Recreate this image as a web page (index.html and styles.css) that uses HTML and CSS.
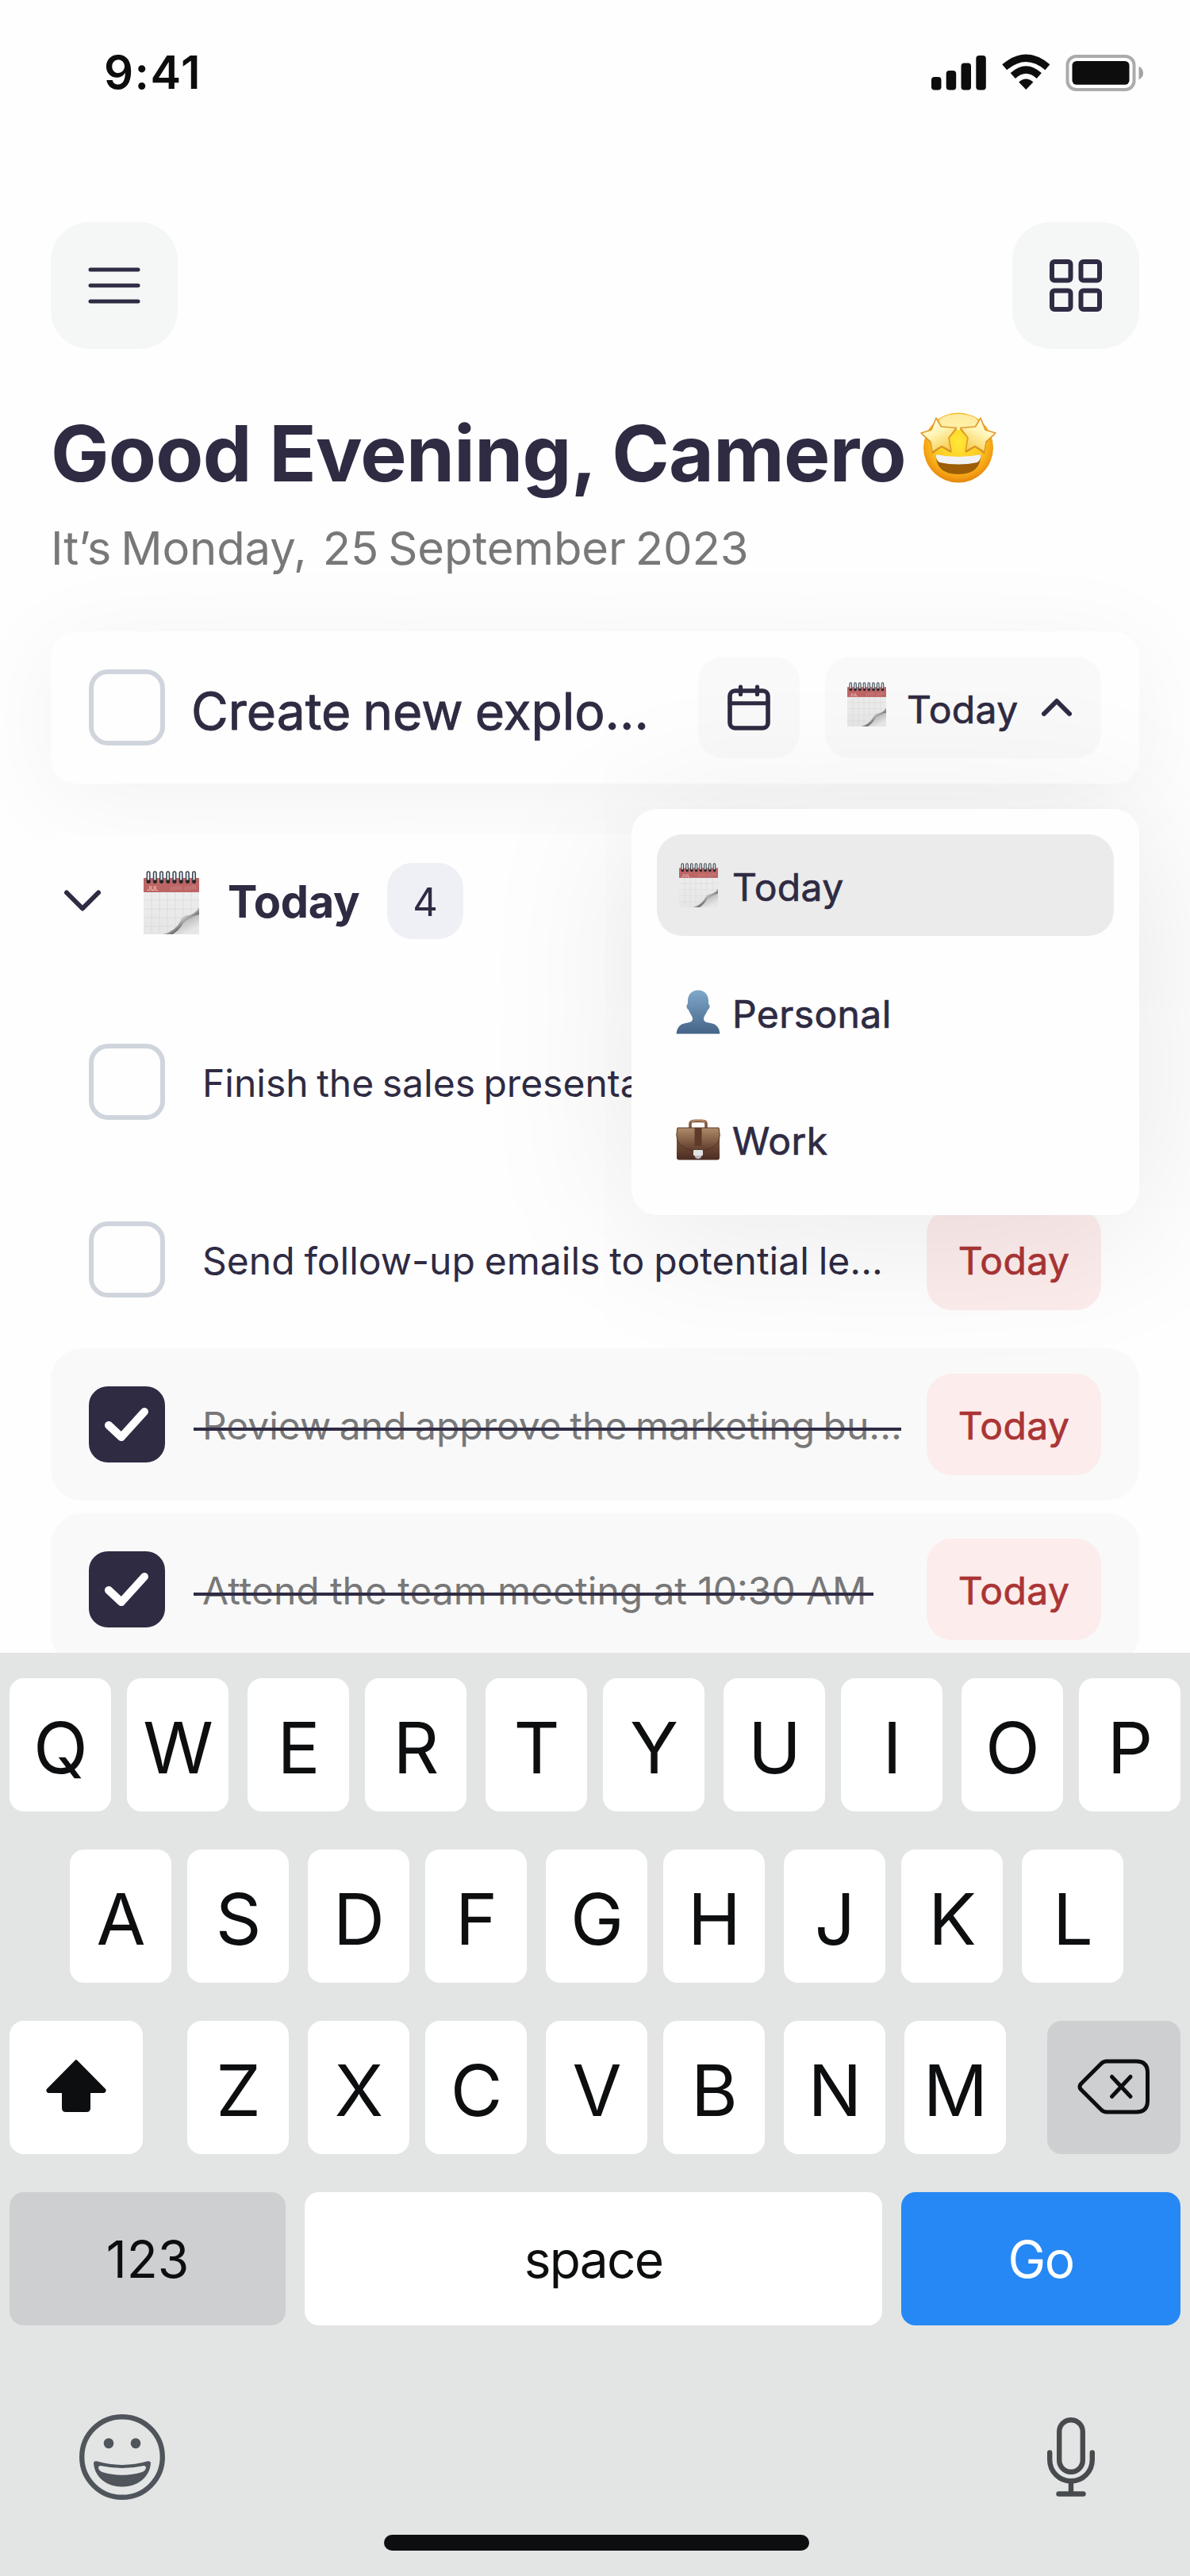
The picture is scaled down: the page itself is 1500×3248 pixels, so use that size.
FILE: index.html
```html
<!DOCTYPE html>
<html lang="en">
<head>
<meta charset="utf-8">
<title>Tasks</title>
<link rel="stylesheet" href="styles.css">
</head>
<body>
<svg class="defs" aria-hidden="true">
  <defs>
    <linearGradient id="page" x1="0" y1="0" x2="0" y2="1"><stop offset="0" stop-color="#efefef"/><stop offset="1" stop-color="#e6e6e6"/></linearGradient>
    <linearGradient id="curl" x1="0.1" y1="0.1" x2="0.62" y2="0.62"><stop offset="0" stop-color="#fdfdfd"/><stop offset="0.45" stop-color="#f4f4f4"/><stop offset="0.8" stop-color="#b5b5b5"/><stop offset="1" stop-color="#6f6f6f"/></linearGradient>
    <linearGradient id="under" x1="0.3" y1="0.2" x2="0.7" y2="0.8"><stop offset="0" stop-color="#7c7c7c"/><stop offset="0.35" stop-color="#c4c4c4"/><stop offset="1" stop-color="#e6e6e6"/></linearGradient>
    <linearGradient id="person" x1="0" y1="0" x2="0" y2="1"><stop offset="0" stop-color="#7fa8ca"/><stop offset="1" stop-color="#456487"/></linearGradient>
    <linearGradient id="leather" x1="0" y1="0" x2="0" y2="1"><stop offset="0" stop-color="#a98463"/><stop offset="0.45" stop-color="#74503a"/><stop offset="1" stop-color="#4b2c22"/></linearGradient>
    <linearGradient id="flap" x1="0" y1="0" x2="0" y2="1"><stop offset="0" stop-color="#b08c6a"/><stop offset="1" stop-color="#5c3929"/></linearGradient>
    <radialGradient id="face" cx="0.5" cy="0.42" r="0.58"><stop offset="0" stop-color="#ffe838"/><stop offset="0.6" stop-color="#fcc921"/><stop offset="0.88" stop-color="#f39c12"/><stop offset="1" stop-color="#e2860c"/></radialGradient>
    <linearGradient id="star" x1="0" y1="0" x2="0.6" y2="1"><stop offset="0" stop-color="#fffef0"/><stop offset="0.5" stop-color="#fff6b8"/><stop offset="1" stop-color="#f7cf52"/></linearGradient>
    <g id="ring"><rect x="-1.7" y="1" width="3.6" height="14" rx="1.8" fill="#e9eef2" stroke="#3b4650" stroke-width="1.5"/><circle cx="0.3" cy="13.6" r="2.3" fill="#2b2426"/></g>
    <symbol id="calendar" viewBox="0 0 70 80">
      <rect y="9" width="70" height="71" fill="url(#page)"/>
      <path d="M10 27V79M20 27V79M30 27V79M40 27V79M50 27V79M60 27V79M0 37H70M0 48H70M0 59H70M0 70H70" stroke="#d9d9d9" stroke-width="0.8"/>
      <rect y="9" width="70" height="18" fill="#bd6565"/>
      <path d="M35 20V25M38 20V25M41 19V24M44 19V24M47 19V24M53 20V25M56 19V24M59 19V24M62 18V23M65 18V23" stroke="#cf8b8b" stroke-width="1"/>
      <text x="4.5" y="25" class="calendar-month">JUL</text>
      <path d="M24 80Q40 76 46 64Q49 56 57 56Q65 54 70 46V57Q56 58 50 66Q46 74 37 80Z" fill="url(#curl)"/>
      <path d="M37 80Q46 74 50 66Q56 58 70 55V80Z" fill="url(#under)"/>
      <use href="#ring" x="6"/><use href="#ring" x="14.2"/><use href="#ring" x="22.4"/><use href="#ring" x="30.6"/><use href="#ring" x="38.8"/><use href="#ring" x="47"/><use href="#ring" x="55.2"/><use href="#ring" x="63.4"/>
    </symbol>
  </defs>
</svg>

<main class="app">
  <div class="status">
    <span class="status__time">9:41</span>
    <svg class="status__icons" width="268" height="48" viewBox="0 0 268 48">
      <g fill="#0d0d0d">
        <rect x="0" y="30" width="12.5" height="16.5" rx="4"/><rect x="18.7" y="22" width="12.5" height="24.5" rx="4"/><rect x="37.5" y="12.5" width="12.5" height="34" rx="4"/><rect x="56.3" y="3" width="12.5" height="43.5" rx="4"/>
        <path d="M119.300 46L110.200 36.600Q119.300 28.500 128.400 36.600Z"/>
      </g>
      <g fill="none" stroke="#0d0d0d" stroke-width="9.200">
        <path d="M102.800 28.500Q119.300 13.500 135.800 28.500"/>
        <path d="M92.200 17.800Q119.300 -5.200 146.400 17.800"/>
      </g>
      <rect x="171.500" y="4" width="84" height="42" rx="11" fill="none" stroke="#ababab" stroke-width="4"/>
      <rect x="177.500" y="10" width="72" height="29.800" rx="5.500" fill="#0d0d0d"/>
      <path d="M261.500 16.500Q267 19.500 267 25Q267 30.500 261.500 33.500Z" fill="#a3a3a3"/>
    </svg>
  </div>

  <div class="toolbar">
    <button class="square-btn" aria-label="Menu">
      <svg width="72" height="60" viewBox="0 0 72 60"><path d="M6 10H66M6 30H66M6 50H66" stroke="#2f2b43" stroke-width="5" stroke-linecap="round"/></svg>
    </button>
    <button class="square-btn" aria-label="Grid view">
      <svg width="66" height="66" viewBox="0 0 66 66" fill="none" stroke="#2f2b43" stroke-width="6"><rect x="3" y="3" width="23.500" height="23.500" rx="3"/><rect x="39.500" y="3" width="23.500" height="23.500" rx="3"/><rect x="3" y="39.500" width="23.500" height="23.500" rx="3"/><rect x="39.500" y="39.500" width="23.500" height="23.500" rx="3"/></svg>
    </button>
  </div>

  <header class="greeting">
    <h1 class="greeting__title"><span>Good Evening, Camero</span>
      <svg width="100" height="92" viewBox="0 0 100 92">
        <circle cx="50" cy="45.500" r="44" fill="url(#face)"/>
        <ellipse cx="50" cy="13" rx="25" ry="10" fill="#fffad0" opacity="0.75"/>
        <path d="M21.500 54Q50 63 78.500 54Q78 79 50 79Q22 79 21.500 54Z" fill="#9c5d06"/>
        <path d="M21.500 54Q50 60 78.500 54Q78.500 61 74 64Q50 69 26 64Q21.500 61 21.500 54Z" fill="#f2f2f4"/>
        <g id="eye"><path d="M22 10L29 20L48 22L38 34L41 52L29 45L17 53L15 39L4 29L16 24Z" fill="#a86408" opacity="0.75"/><path d="M22 8L28.500 19L47.500 20.500L38 33L41 50L29 43.500L17 51L15 38L3 27L16 23Z" fill="url(#star)" stroke="#e09a2c" stroke-width="1.600" stroke-linejoin="round"/></g>
        <use href="#eye" transform="matrix(-1 0 0 1 100 0)"/>
      </svg>
    </h1>
    <p class="greeting__date">It’s Monday, <span class="greeting__day">25 September 2023</span></p>
  </header>

  <section class="add-task">
    <span class="checkbox"></span>
    <span class="add-task__title">Create new explo...</span>
    <button class="chip chip--icon" aria-label="Pick date">
      <svg width="54" height="58" viewBox="0 0 54 58" fill="none" stroke="#2f2b43" stroke-width="5.600" stroke-linecap="round"><rect x="3" y="8" width="48" height="47" rx="6.500"/><path d="M3 23.700H51" stroke-width="5"/><path d="M16.500 3V12.500M37.500 3V12.500" stroke-width="5.200"/></svg>
    </button>
    <button class="chip chip--select">
      <svg class="chip__emoji" width="49" height="56"><use href="#calendar"/></svg>
      <span class="chip__label">Today</span>
      <svg class="chip__chevron" width="38" height="24" viewBox="0 0 38 24" fill="none" stroke="#2f2b43" stroke-width="6" stroke-linecap="round" stroke-linejoin="round"><path d="M3 20L19 4L35 20"/></svg>
    </button>
  </section>

  <section class="list">
    <div class="list__header">
      <svg width="46" height="28" viewBox="0 0 46 28" fill="none" stroke="#2f2b43" stroke-width="6" stroke-linecap="round" stroke-linejoin="round"><path d="M3 3.500L23 23.500L43 3.500"/></svg>
      <svg class="list__emoji" width="70" height="80"><use href="#calendar"/></svg>
      <h2 class="list__title">Today</h2>
      <span class="list__count">4</span>
    </div>
    <div class="task">
      <span class="checkbox"></span>
      <span class="task__title">Finish the sales presentation</span>
    </div>
    <div class="task task--second">
      <span class="checkbox"></span>
      <span class="task__title task__title--loose">Send follow-up emails to potential le...</span>
      <span class="tag">Today</span>
    </div>
    <div class="task task--done">
      <span class="checkbox checkbox--on"><svg width="60" height="48" viewBox="0 0 60 48"><path d="M7 25L23 40L52 8" fill="none" stroke="#fff" stroke-width="10" stroke-linecap="round" stroke-linejoin="round"/></svg></span>
      <span class="task__title"><span class="strike strike--long">Review and approve the marketing bu...</span></span>
      <span class="tag">Today</span>
    </div>
    <div class="task task--done">
      <span class="checkbox checkbox--on"><svg width="60" height="48" viewBox="0 0 60 48"><path d="M7 25L23 40L52 8" fill="none" stroke="#fff" stroke-width="10" stroke-linecap="round" stroke-linejoin="round"/></svg></span>
      <span class="task__title task__title--wide"><span class="strike">Attend the team meeting at 10:30 AM</span></span>
      <span class="tag">Today</span>
    </div>
  </section>

  <ul class="menu">
    <li class="menu__item menu__item--active">
      <span class="menu__icon"><svg width="49" height="56"><use href="#calendar"/></svg></span>
      <span>Today</span>
    </li>
    <li class="menu__item">
      <span class="menu__icon"><svg width="56" height="56" viewBox="0 0 56 56"><path d="M28 0.500C19 0.500 15 7 15 14Q15 17 14.500 18.500Q13 19 13.500 21.500Q14.200 25 16 25.500C17.500 30 21 33 21 36.500C21 40.500 17.500 41 12 42Q1 44 0.500 55.500H55.500Q55 44 44 42C38.500 41 35 40.500 35 36.500C35 33 38.500 30 40 25.500Q41.800 25 42.500 21.500Q43 19 41.500 18.500Q41 17 41 14C41 7 37 0.500 28 0.500Z" fill="url(#person)"/></svg></span>
      <span>Personal</span>
    </li>
    <li class="menu__item">
      <span class="menu__icon"><svg width="56" height="56" viewBox="0 0 56 56">
        <path d="M18 14V9Q18 5.500 23 5.500H33Q38 5.500 38 9V14" fill="none" stroke="#80583e" stroke-width="3.600"/>
        <path d="M19.500 7.500Q20 4.800 24 4.500H32Q36 4.800 36.500 7.500" fill="none" stroke="#b58b6b" stroke-width="2"/>
        <rect x="1" y="14" width="54" height="40.500" rx="3" fill="url(#leather)"/>
        <path d="M2 14H54Q56.500 23 54 31Q47 43 28 43.500Q9 43 2 31Q-0.500 23 2 14Z" fill="url(#flap)" stroke="#4f2f23" stroke-width="0.900"/>
        <rect x="23.500" y="14" width="9" height="23" fill="#5f3a28"/>
        <rect x="22" y="42" width="12" height="7" rx="1" fill="#e4e4e6"/><path d="M23.500 49H32.500Q32 53 28 53Q24 53 23.500 49Z" fill="#bdbdc0"/>
      </svg></span>
      <span>Work</span>
    </li>
  </ul>
</main>

<section class="keyboard">
  <div class="keys">
    <span class="key">Q</span><span class="key">W</span><span class="key">E</span><span class="key">R</span><span class="key">T</span><span class="key">Y</span><span class="key">U</span><span class="key">I</span><span class="key">O</span><span class="key">P</span>
  </div>
  <div class="keys keys--inset">
    <span class="key">A</span><span class="key">S</span><span class="key">D</span><span class="key">F</span><span class="key">G</span><span class="key">H</span><span class="key">J</span><span class="key">K</span><span class="key">L</span>
  </div>
  <div class="keys keys--third">
    <span class="key key--side"><svg width="76" height="70" viewBox="0 0 76 70"><path d="M38 2.500L74 39Q74.500 41 72.500 41.500H54.500V62Q54.500 65.500 51 65.500H25Q21.500 65.500 21.500 62V41.500H3.500Q1.500 41 2 39Z" fill="#0c0e0f" stroke="#0c0e0f" stroke-width="3" stroke-linejoin="round"/></svg></span>
    <span class="key">Z</span><span class="key">X</span><span class="key">C</span><span class="key">V</span><span class="key">B</span><span class="key">N</span><span class="key key--m">M</span>
    <span class="key key--side key--grey"><svg width="92" height="70" viewBox="0 0 92 70" fill="none" stroke="#0c0e0f" stroke-width="5" stroke-linecap="round" stroke-linejoin="round"><path d="M37 3H74Q88.500 3 88.500 17V53Q88.500 67 74 67H37Q33 67 30 64L4.500 38.500Q1.500 35 4.500 31.500L30 6Q33 3 37 3Z"/><path d="M43.500 22.500L67 47.500M67 22.500L43.500 47.500"/></svg></span>
  </div>
  <div class="keys keys--bottom">
    <span class="key key--word key--grey key--num">123</span>
    <span class="key key--word key--space">space</span>
    <span class="key key--word key--go">Go</span>
  </div>
  <div class="keyboard__tools">
    <svg width="108" height="108" viewBox="0 0 108 108"><circle cx="54" cy="54" r="50.800" fill="none" stroke="#50555c" stroke-width="6.400"/><ellipse cx="37" cy="36.700" rx="6.300" ry="6.500" fill="#50555c"/><ellipse cx="71" cy="36.700" rx="6.300" ry="6.500" fill="#50555c"/><path fill-rule="evenodd" d="M22 59.300Q54 68.500 86 59.300Q90 58.500 90 62C88.500 80 73 91.500 54 91.500S19.500 80 18 62Q18 58.500 22 59.300ZM27 65Q24 64.500 24 67.500Q24.500 71 29 73Q54 80.500 79 73Q83.500 71 84 67.500Q84 64.500 81 65Q54 71 27 65Z" fill="#50555c"/></svg>
    <svg width="60" height="100" viewBox="0 0 60 100" fill="none" stroke="#474b4d" stroke-width="6.400" stroke-linecap="round"><rect x="15.200" y="3.200" width="29.600" height="65.600" rx="14.800"/><path d="M3.200 44.500V53.500A26.800 26.800 0 0 0 56.800 53.500V44.500M30 81V95M14.500 96.500H45.500"/></svg>
  </div>
  <div class="home-bar"></div>
</section>
</body>
</html>
```
FILE: styles.css
```css
* { box-sizing: border-box; }

body {
  margin: 0;
  width: 1500px;
  font-family: Inter, "Liberation Sans", sans-serif;
  color: #2f2b43;
  background: #fefefe;
}

h1, h2, p, ul { margin: 0; padding: 0; }
button { border: 0; padding: 0; font: inherit; color: inherit; }
svg { display: block; flex: none; }
.defs { position: absolute; width: 0; height: 0; }
.calendar-month { font: 400 7.5px Inter, sans-serif; fill: #f5dede; }

.app {
  position: relative;
  height: 2084px;
  padding: 0 64px;
  overflow: hidden;
}

/* Status bar */
.status {
  display: flex;
  justify-content: space-between;
  align-items: center;
  height: 182px;
  margin-right: -6px;
  padding-left: 67px;
}
.status__time { font-size: 58px; font-weight: 600; letter-spacing: 1.5px; color: #0d0d0d; }

/* Toolbar */
.toolbar { display: flex; justify-content: space-between; margin-top: 98px; }
.square-btn {
  display: flex;
  align-items: center;
  justify-content: center;
  width: 160px;
  height: 160px;
  border-radius: 48px;
  background: #f5f7f7;
}

/* Greeting */
.greeting { margin-top: 70px; }
.greeting__title {
  display: flex;
  gap: 16px;
  font-size: 98px;
  line-height: 124px;
  font-weight: 700;
  letter-spacing: -0.7px;
  white-space: nowrap;
}
.greeting__title svg { margin-top: 9px; }
.greeting__date {
  margin: 15px 0 0;
  font-size: 58px;
  line-height: 84px;
  word-spacing: -4px;
  letter-spacing: -0.15px;
  color: #787878;
}
.greeting__day { margin-left: 8px; }

/* New task card */
.add-task {
  display: flex;
  align-items: center;
  height: 192px;
  margin-top: 63px;
  padding: 0 48px;
  border-radius: 32px;
  background: #fefefe;
  box-shadow: 0 16px 128px rgba(0, 0, 0, 0.05);
}
.add-task__title {
  flex: 1;
  margin-left: 33px;
  padding-top: 9px;
  font-size: 64px;
  word-spacing: -3px;
  -webkit-text-stroke: 0.9px currentColor;
  white-space: nowrap;
}
.chip {
  display: flex;
  align-items: center;
  height: 128px;
  border-radius: 32px;
  background: #f9f9f9;
}
.chip--icon { width: 128px; justify-content: center; }
.chip--select { width: 348px; margin-left: 32px; padding: 0 37px 0 28px; }
.chip__emoji { margin-bottom: 8px; }
.chip__label { margin-left: 26px; padding-top: 4px; }
.chip__label, .tag, .menu__item {
  font-size: 48px;
  letter-spacing: 0.4px;
  -webkit-text-stroke: 0.7px currentColor;
}
.chip__chevron { margin-left: auto; }

.checkbox {
  flex: none;
  display: flex;
  align-items: center;
  justify-content: center;
  width: 96px;
  height: 96px;
  border: 6px solid #d0d5dd;
  border-radius: 24px;
}
.checkbox--on { border-color: #2f2b43; background: #2f2b43; }

/* Task list */
.list { margin-top: 64px; background: #fefefe; }
.list__header { display: flex; align-items: center; height: 168px; padding-left: 17px; margin-bottom: 48px; }
.list__emoji { margin: 4px 0 0 54px; }
.list__title { width: 201px; margin-left: 36px; padding-top: 2px; font-size: 56px; font-weight: 700; letter-spacing: -0.3px; }
.list__count {
  width: 96px;
  height: 96px;
  padding-top: 2px;
  border-radius: 32px;
  background: #eff0f6;
  font-size: 49px;
  line-height: 96px;
  text-align: center;
}
.task {
  display: flex;
  align-items: center;
  height: 192px;
  padding: 0 48px;
  border-radius: 40px;
}
.task--second { margin: 32px 0 16px; }
.task--done { margin-bottom: 16px; background: #f9f9f9; color: #787878; }
.task__title {
  flex: 1;
  margin-left: 47px;
  padding-top: 4px;
  font-size: 48px;
  line-height: 60px;
  word-spacing: -3px;
  white-space: nowrap;
}
.task__title--loose { word-spacing: -1.6px; }
.task__title--wide { word-spacing: -0.3px; }
.strike { position: relative; }
.strike::after {
  content: "";
  position: absolute;
  left: -11px;
  right: -9px;
  top: 32px;
  height: 4px;
  background: #2f2b43;
}
.strike--long::after { right: 1px; }
.tag {
  width: 220px;
  height: 128px;
  padding-top: 2px;
  border-radius: 32px;
  background: #fdecec;
  color: #aa3535;
  line-height: 128px;
  text-align: center;
}

/* List picker, floating over the tasks */
.menu {
  position: absolute;
  top: 1020px;
  right: 64px;
  display: flex;
  flex-direction: column;
  gap: 32px;
  width: 640px;
  padding: 32px;
  border-radius: 32px;
  background: #fefefe;
  box-shadow: 0 16px 192px rgba(0, 0, 0, 0.1);
  list-style: none;
}
.menu__item {
  display: flex;
  align-items: center;
  gap: 15px;
  height: 128px;
  padding: 0 24px;
  border-radius: 32px;
}
.menu__item > span:last-child { padding-top: 4px; }
.menu__item--active { background: #ebebeb; }
.menu__icon { display: flex; justify-content: center; width: 56px; }

/* Keyboard */
.keyboard {
  display: flex;
  flex-direction: column;
  gap: 48px;
  height: 1164px;
  padding: 32px 12px 0;
  background: #e2e5e4;
  color: #0c0e0f;
}
.keys { display: flex; }
.keys--inset { padding-left: 76px; }
.key {
  display: flex;
  align-items: center;
  justify-content: center;
  width: 128px;
  height: 168px;
  padding: 6px 0 0 1px;
  border-radius: 18px;
  background: #fff;
  font-size: 90px;
}
.key:nth-child(odd) { margin-right: 20px; }
.key:nth-child(even) { margin-right: 24px; }
.key:last-child { margin-right: 0; }
.key--side { width: 168px; padding: 0 0 2px; }
.keys--third .key--side:first-child { margin-right: 56px; }
.keys--third .key--m { margin: 0 52px 0 4px; }
.key--grey { background: #cecfd1; }
.key--word { padding: 0; font-size: 64px; }
.keys--bottom { gap: 24px; }
.keys--bottom .key { margin: 0; }
.key--num { width: 348px; }
.key--space { width: 728px; letter-spacing: -1.8px; }
.key--go { width: 352px; background: #2688f5; color: #fff; letter-spacing: -1.5px; }
.keyboard__tools {
  display: flex;
  justify-content: space-between;
  align-items: center;
  margin-top: 64px;
  padding: 0 108px 0 88px;
}
.home-bar { width: 536px; height: 20px; margin: -4px 0 0 472px; border-radius: 10px; background: #0c0e0f; }
```
